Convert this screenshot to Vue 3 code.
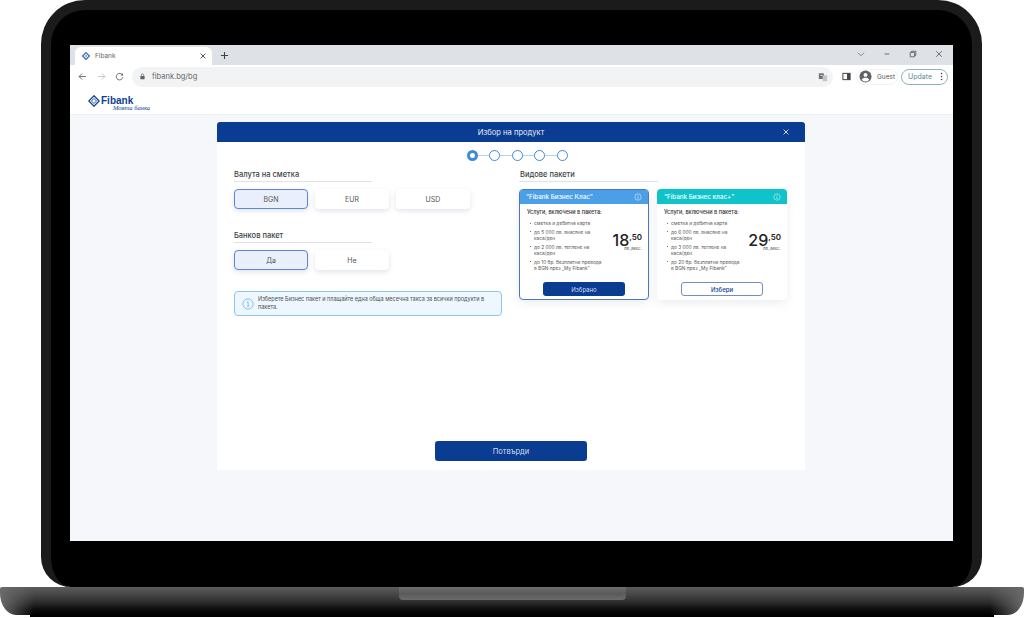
<template>
  <div class="page">
    <div class="lid">
      <div class="screen">
        <div class="tabstrip">
          <div class="tab">
            <svg class="favicon" viewBox="0 0 12 12"><path d="M6 .8 11.2 6 6 11.2.8 6z" fill="none" stroke="#2f62b5" stroke-width="1.6"/><path d="M6 3.8 8.2 6 6 8.2 3.8 6z" fill="#7fa4de"/></svg>
            <span class="tab-title">Fibank</span>
            <svg class="tab-x" viewBox="0 0 10 10"><path d="M2 2l6 6M8 2l-6 6" stroke="#444" stroke-width="1.1"/></svg>
          </div>
          <svg class="tab-plus" viewBox="0 0 10 10"><path d="M5 1v8M1 5h8" stroke="#444" stroke-width="1.2"/></svg>
          <div class="win-controls">
            <svg viewBox="0 0 10 10"><path d="M1 3.5 5 7l4-3.5" fill="none" stroke="#777" stroke-width="1"/></svg>
            <svg viewBox="0 0 10 10"><path d="M2 5h6" stroke="#555" stroke-width="1"/></svg>
            <svg viewBox="0 0 10 10"><path d="M1.5 3h5.5v5.5H1.5zM3.2 3V1.500h5.300v5.300H7" fill="none" stroke="#555" stroke-width="1"/></svg>
            <svg viewBox="0 0 10 10"><path d="M1.5 1.500l7 7M8.500 1.500l-7 7" stroke="#555" stroke-width="1"/></svg>
          </div>
        </div>
        <div class="toolbar">
          <div class="nav-icons">
            <svg viewBox="0 0 12 12"><path d="M10.500 6h-9M5.500 2 1.500 6l4 4" fill="none" stroke="#5f6368" stroke-width="1.2"/></svg>
            <svg viewBox="0 0 12 12"><path d="M1.500 6h9M6.500 2l4 4-4 4" fill="none" stroke="#bcc0c4" stroke-width="1.2"/></svg>
            <svg viewBox="0 0 12 12"><path d="M10 4.200A4.400 4.400 0 1 0 10.400 7" fill="none" stroke="#5f6368" stroke-width="1.2"/><path d="M10.600 1.400v3.400H7.200z" fill="#5f6368"/></svg>
          </div>
          <div class="omnibox">
            <svg class="lock" viewBox="0 0 10 10"><path d="M3.200 4.500V3.200a1.800 1.800 0 0 1 3.600 0v1.300" fill="none" stroke="#5f6368"/><rect x="2" y="4.300" width="6" height="4.700" rx=".8" fill="#5f6368"/></svg>
            <span class="url">fibank.bg/bg</span>
            <svg class="translate" viewBox="0 0 12 12"><rect x="1" y="1.500" width="6" height="7" rx=".7" fill="#6d7175"/><rect x="5.500" y="4" width="5.500" height="7" rx=".7" fill="#c3c6c9"/><path d="M3 4h2" stroke="#fff"/></svg>
          </div>
          <svg class="panel" viewBox="0 0 10 10"><rect x="1" y="1.500" width="8" height="7" fill="none" stroke="#444" stroke-width="1.1"/><rect x="5.600" y="1.500" width="3.400" height="7" fill="#444"/></svg>
          <div class="profile">
            <svg viewBox="0 0 14 14"><circle cx="7" cy="7" r="6.500" fill="#5f6368"/><circle cx="7" cy="5.300" r="2.100" fill="#fff"/><path d="M3 10.400C3.800 8.900 5.300 8.300 7 8.300s3.200.6 4 2.100a5 5 0 0 1-8 0z" fill="#fff"/></svg>
            <span>Guest</span>
          </div>
          <div class="update">
            <span>Update</span>
            <svg viewBox="0 0 4 12"><circle cx="2" cy="2" r="1" fill="#444"/><circle cx="2" cy="6" r="1" fill="#444"/><circle cx="2" cy="10" r="1" fill="#444"/></svg>
          </div>
        </div>
        <header class="site-head">
          <div class="logo">
            <svg viewBox="0 0 12 12"><path d="M6 .8 11.200 6 6 11.200.8 6z" fill="none" stroke="#0b3f92" stroke-width="1.3"/><path d="M6 3.500 8.500 6 6 8.500 3.500 6z" fill="none" stroke="#0b3f92" stroke-width=".9"/></svg>
            <div class="logo-text">
              <span class="logo-name">Fibank</span>
              <span class="logo-tag">Моята банка</span>
            </div>
          </div>
        </header>
        <main class="site-body">
          <section class="modal">
            <div class="modal-head">
              <span>Избор на продукт</span>
              <svg class="modal-x" viewBox="0 0 10 10"><path d="M2 2l6 6M8 2l-6 6" stroke="#fff" stroke-width="1"/></svg>
            </div>
            <div class="stepper">
              <template v-for="(s, i) in 5" :key="s">
                <span v-if="i > 0" class="step-line"></span>
                <span class="step" :class="{ current: i === 0 }"></span>
              </template>
            </div>
            <div class="modal-body">
              <div class="col-left">
                <h3 class="group-title">Валута на сметка</h3>
                <div class="choices">
                  <button v-for="c in currencies" :key="c" class="choice" :class="{ picked: c === 'BGN' }">{{ c }}</button>
                </div>
                <h3 class="group-title second">Банков пакет</h3>
                <div class="choices">
                  <button class="choice picked">Да</button>
                  <button class="choice">Не</button>
                </div>
                <div class="notice">
                  <svg viewBox="0 0 14 14"><circle cx="7" cy="7" r="6" fill="none" stroke="#63b3ea" stroke-width=".9"/><path d="M6 5.400h1.200v4.200M5.800 9.800h2.600" fill="none" stroke="#63b3ea" stroke-width=".9"/><circle cx="6.900" cy="3.800" r=".6" fill="#63b3ea"/></svg>
                  <p>Изберете Бизнес пакет и плащайте една обща месечна такса за всички продукти в пакета.</p>
                </div>
              </div>
              <div class="col-right">
                <h3 class="group-title">Видове пакети</h3>
                <div class="cards">
                  <article v-for="p in plans" :key="p.name" class="card" :class="{ selected: p.selected, teal: !p.selected }">
                    <div class="card-head">
                      <span>{{ p.name }}</span>
                      <svg viewBox="0 0 10 10"><circle cx="5" cy="5" r="4" fill="none" stroke="#fff" stroke-width=".6"/><path d="M5 4.400v3" stroke="#fff" stroke-width=".7"/><circle cx="5" cy="3" r=".45" fill="#fff"/></svg>
                    </div>
                    <div class="card-body">
                      <div class="card-title">Услуги, включени в пакета:</div>
                      <div class="card-main">
                        <ul>
                          <li v-for="f in p.features" :key="f">{{ f }}</li>
                        </ul>
                        <div class="price">
                          <div class="price-num">{{ p.whole }}<sup>,{{ p.cents }}</sup></div>
                          <div class="price-unit">лв./мес.</div>
                        </div>
                      </div>
                      <button class="card-btn">{{ p.selected ? 'Избрано' : 'Избери' }}</button>
                    </div>
                  </article>
                </div>
              </div>
            </div>
            <div class="modal-foot">
              <button class="confirm">Потвърди</button>
            </div>
          </section>
        </main>
      </div>
    </div>
    <div class="base">
      <div class="notch"></div>
    </div>
    <div class="foot"></div>
  </div>
</template>

<script setup>
const currencies = ['BGN', 'EUR', 'USD']

const plans = [
  {
    name: '“Fibank Бизнес Клас”',
    selected: true,
    whole: '18',
    cents: '50',
    features: [
      'сметка и дебитна карта',
      'до 5 000 лв. внасяне на\nкаса/ден',
      'до 2 000 лв. теглене на\nкаса/ден',
      'до 10 бр. безплатни превода\nв BGN през „My Fibank”'
    ]
  },
  {
    name: '“Fibank Бизнес клас+”',
    selected: false,
    whole: '29',
    cents: '50',
    features: [
      'сметка и дебитна карта',
      'до 6 000 лв. внасяне на\nкаса/ден',
      'до 3 000 лв. теглене на\nкаса/ден',
      'до 20 бр. безплатни превода\nв BGN през „My Fibank”'
    ]
  }
]
</script>

<style>
html, body {
  margin: 0;
  background: #fff;
}
</style>

<style scoped>
.page {
  width: 1024px;
  height: 618px;
  overflow: hidden;
  font-family: Inter, "Noto Sans", sans-serif;
  color: #333;
}

.lid {
  box-sizing: border-box;
  width: 941px;
  height: 587px;
  margin-left: 41px;
  padding: 35px 18px 0;
  background: #000;
  border: 10px solid #1b1b1b;
  border-bottom: 0;
  border-radius: 44px 44px 30px 30px;
}

.screen {
  width: 883px;
  height: 496px;
  margin-left: 1px;
  display: flex;
  flex-direction: column;
  background: #fff;
  overflow: hidden;
}

.tabstrip {
  height: 20px;
  flex: none;
  display: flex;
  align-items: flex-end;
  padding-left: 5px;
  background: #dee1e6;
}

.tab {
  width: 137px;
  height: 18px;
  box-sizing: border-box;
  display: flex;
  align-items: center;
  padding: 0 5px 0 7px;
  background: #fff;
  border-radius: 6px 6px 0 0;
}

.favicon {
  width: 8px;
  height: 8px;
}

.tab-title {
  margin-left: 5px;
  font-size: 6.5px;
  color: #666;
  flex: 1;
}

.tab-x {
  width: 8px;
  height: 8px;
}

.tab-plus {
  width: 9px;
  height: 9px;
  margin: 0 0 5px 8px;
}

.win-controls {
  margin-left: auto;
  margin-right: 10px;
  margin-bottom: 7px;
  display: flex;
  gap: 18px;
}

.win-controls svg {
  width: 8px;
  height: 8px;
}

.toolbar {
  height: 23px;
  flex: none;
  display: flex;
  align-items: center;
  padding-left: 8px;
  background: #fff;
}

.nav-icons {
  display: flex;
  gap: 9.5px;
}

.nav-icons svg {
  width: 9px;
  height: 9px;
}

.omnibox {
  width: 701px;
  height: 20px;
  box-sizing: border-box;
  margin-left: 8px;
  display: flex;
  align-items: center;
  padding: 0 5px 0 7px;
  background: #f1f3f4;
  border-radius: 10px;
}

.lock {
  width: 7px;
  height: 7px;
}

.url {
  margin-left: 6px;
  font-size: 7.5px;
  color: #666;
}

.translate {
  width: 10px;
  height: 10px;
  margin-left: auto;
}

.panel {
  width: 9px;
  height: 9px;
  margin-left: 9px;
}

.profile {
  width: 42px;
  height: 16px;
  box-sizing: border-box;
  margin-left: 5px;
  display: flex;
  align-items: center;
  gap: 5px;
  padding-left: 2px;
  font-size: 6.5px;
  color: #555;
  border: 1px solid #f3f3f3;
  border-radius: 8px;
}

.profile svg {
  width: 13px;
  height: 13px;
}

.update {
  width: 47px;
  height: 16px;
  box-sizing: border-box;
  margin-left: 3px;
  display: flex;
  align-items: center;
  justify-content: space-between;
  padding: 0 4px 0 6px;
  font-size: 7px;
  color: #5f8a8f;
  border: 1px solid #8fb5b3;
  border-radius: 8px;
}

.update svg {
  width: 3px;
  height: 9px;
}

.site-head {
  height: 27px;
  flex: none;
  box-sizing: border-box;
  padding: 7px 0 0 18px;
  background: #fff;
  border-bottom: 1px solid #eceef2;
}

.logo {
  display: flex;
  gap: 1px;
}

.logo svg {
  width: 12px;
  height: 12px;
}

.logo-text {
  display: flex;
  flex-direction: column;
  line-height: 1;
}

.logo-name {
  margin-top: 1px;
  font-family: "Liberation Sans", sans-serif;
  font-size: 10px;
  font-weight: 700;
  color: #0b3f92;
}

.logo-tag {
  margin: -1px 0 0 12px;
  font-family: "Liberation Serif", serif;
  font-size: 6.5px;
  font-style: italic;
  white-space: nowrap;
  color: #0b3f92;
}

.site-body {
  flex: 1;
  padding-top: 7px;
  background: #f6f7fa;
}

.modal {
  width: 588px;
  height: 348px;
  margin-left: 147px;
  display: flex;
  flex-direction: column;
  background: #fff;
}

.modal-head {
  height: 20px;
  flex: none;
  position: relative;
  display: flex;
  align-items: center;
  justify-content: center;
  font-size: 7.6px;
  color: #e6ecf7;
  background: #0a3d91;
  border-radius: 3px 3px 0 0;
}

.modal-x {
  position: absolute;
  right: 15px;
  top: 6px;
  width: 8px;
  height: 8px;
}

.stepper {
  height: 11px;
  margin-top: 8px;
  padding-left: 12px;
  flex: none;
  display: flex;
  align-items: center;
  justify-content: center;
}

.step {
  box-sizing: border-box;
  width: 11px;
  height: 11px;
  border: 1.3px solid #3f8ad6;
  border-radius: 50%;
  background: #fff;
}

.step.current {
  border: 3.5px solid #3f8ad6;
}

.step-line {
  width: 11.5px;
  height: 1px;
  background: #b5d2ef;
}

.modal-body {
  flex: 1;
  display: flex;
  gap: 17px;
  padding: 8px 0 0 17px;
}

.col-left {
  width: 268px;
}

.group-title {
  width: 138px;
  margin: 0;
  padding-bottom: 1px;
  font-size: 7.5px;
  font-weight: 500;
  line-height: 11px;
  color: #3c3f44;
  border-bottom: 1px solid #dfe2e6;
}

.group-title.second {
  margin-top: 21px;
}

.choices {
  display: flex;
  gap: 7px;
  margin-top: 7px;
}

.choice {
  width: 74px;
  height: 20px;
  padding: 0;
  font-family: inherit;
  font-size: 7px;
  color: #555;
  background: #fff;
  border: 0;
  border-radius: 4px;
  box-shadow: 0 2px 5px rgba(70, 90, 130, 0.16);
}

.choice.picked {
  background: #e9f0fb;
  border: 1px solid #5f86c8;
}

.notice {
  box-sizing: border-box;
  height: 25px;
  margin-top: 21px;
  display: flex;
  align-items: center;
  gap: 4px;
  padding: 0 7px;
  background: #eef7fe;
  border: 1px solid #8fc8ef;
  border-radius: 4px;
}

.notice svg {
  flex: none;
  width: 12px;
  height: 12px;
}

.notice p {
  margin: 0;
  font-size: 5.5px;
  line-height: 7.5px;
  color: #4a4f57;
}

.col-right {
  width: 270px;
}

.col-right .group-title {
  padding-left: 1px;
}

.cards {
  display: flex;
  gap: 8px;
  margin-top: 7px;
}

.card {
  box-sizing: border-box;
  width: 130px;
  height: 111px;
  display: flex;
  flex-direction: column;
  background: #fff;
  border-radius: 4px;
  box-shadow: 0 3px 9px rgba(70, 90, 130, 0.1);
  overflow: hidden;
}

.card.selected {
  border: 1px solid #4d76bd;
}

.card-head {
  height: 15px;
  flex: none;
  display: flex;
  align-items: center;
  justify-content: space-between;
  padding: 0 6px 0 7px;
  font-size: 6.3px;
  font-weight: 500;
  color: #fff;
}

.card-head svg {
  width: 8px;
  height: 8px;
}

.selected .card-head {
  height: 14px;
  padding-left: 6px;
  background: #4a9fe6;
}

.teal .card-head {
  background: #10c3cb;
}

.card-body {
  flex: 1;
  display: flex;
  flex-direction: column;
  padding: 5px 7px 4px;
}

.selected .card-body {
  padding: 5px 7px 3px;
}

.card-title {
  font-size: 5.5px;
  font-weight: 500;
  line-height: 7px;
  color: #333;
}

.card-main {
  flex: 1;
  display: flex;
  align-items: flex-start;
  justify-content: space-between;
  margin-top: 4px;
}

.card-main ul {
  margin: 0;
  padding: 0;
  list-style: none;
  font-size: 4.8px;
  line-height: 6.5px;
  color: #555;
}

.card-main li {
  position: relative;
  margin-bottom: 2px;
  padding-left: 7px;
  white-space: pre-line;
}

.card-main li::before {
  content: "";
  position: absolute;
  left: 3px;
  top: 2.5px;
  width: 1px;
  height: 1px;
  border-radius: 50%;
  background: #444;
}

.price {
  margin: 14px -1px 0 0;
  text-align: right;
  white-space: nowrap;
}

.price-num {
  font-size: 16px;
  font-weight: 500;
  line-height: 12px;
  color: #222;
}

.price-num sup {
  font-size: 8px;
  font-weight: 600;
  line-height: 0;
  vertical-align: 6px;
}

.price-unit {
  font-size: 4.5px;
  line-height: 5px;
  color: #555;
}

.card-btn {
  align-self: center;
  box-sizing: border-box;
  width: 82px;
  height: 14px;
  flex: none;
  padding: 0;
  font-family: inherit;
  font-size: 6px;
  border-radius: 3px;
}

.selected .card-btn {
  color: #cfdcf2;
  background: #0a3d91;
  border: 0;
}

.teal .card-btn {
  color: #0a3d91;
  font-weight: 500;
  background: #fff;
  border: 1px solid #6f8fc6;
}

.modal-foot {
  flex: none;
  display: flex;
  justify-content: center;
  padding-bottom: 9px;
}

.confirm {
  width: 152px;
  height: 20px;
  padding: 0;
  font-family: inherit;
  font-size: 7.5px;
  color: #cfdcf2;
  background: #0a3d91;
  border: 0;
  border-radius: 3px;
}

.base {
  position: relative;
  height: 28px;
  background:
    linear-gradient(90deg, #6a6a6a 0, rgba(90, 90, 90, 0) 34px, rgba(90, 90, 90, 0) 990px, #6a6a6a 100%),
    linear-gradient(180deg, #5c5c5c 0, #454545 8px, #2a2a2a 16px, #0d0d0d 22px, #000 100%);
  border-radius: 2px 2px 16px 16px / 2px 2px 22px 22px;
}

.notch {
  position: absolute;
  left: 399px;
  top: 0;
  width: 227px;
  height: 13px;
  background: linear-gradient(180deg, #6e6e6e, #5a5a5a 50%, #6a6a6a);
  border-radius: 0 0 4px 4px;
}

.foot {
  height: 2px;
  margin: 0 30px;
  background: #000;
}
</style>
